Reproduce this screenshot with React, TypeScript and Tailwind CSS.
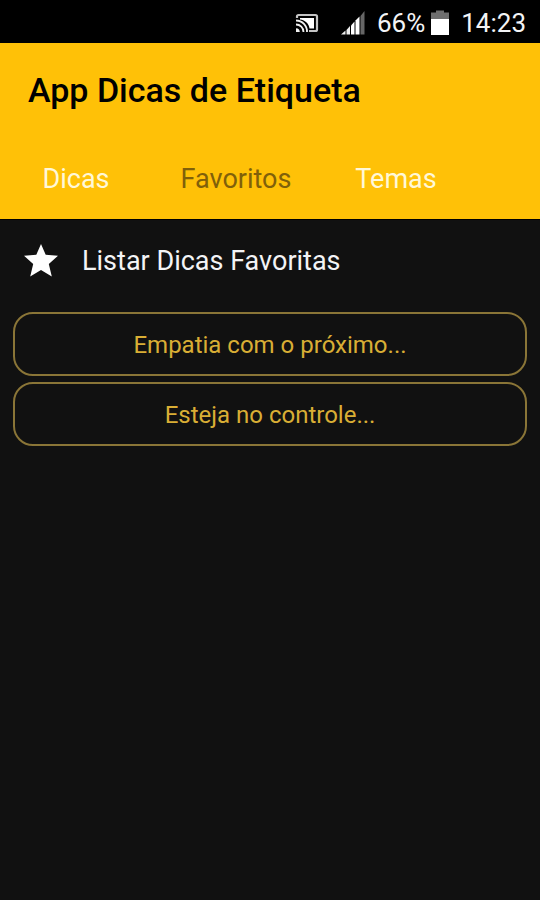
import { useState } from 'react';
import clsx from 'clsx';

const tabs = ['Dicas', 'Favoritos', 'Temas'];
const favorites = ['Empatia com o próximo...', 'Esteja no controle...'];

function CastIcon() {
  return (
    <svg viewBox="0 0 24 20" className="h-5 w-6" fill="none" aria-hidden="true">
      <path d="M2 5V3.500A1.500 1.500 0 0 1 3.500 2H20.500A1.500 1.500 0 0 1 22 3.500V16.500A1.500 1.500 0 0 1 20.500 18H14" stroke="#c4c4c4" strokeWidth="2.200" />
      <path d="M5 5H19V15.500H14.500C14 11 10.500 7 5 6.500Z" fill="#fff" />
      <path d="M1 7.500A11 11 0 0 1 12 19M1 11.500A7.500 7.500 0 0 1 8.500 19" stroke="#f0f0f0" strokeWidth="1.800" />
      <path d="M1 15.200A4 4 0 0 1 4.800 19H1Z" fill="#f0f0f0" />
    </svg>
  );
}

function SignalIcon() {
  return (
    <svg viewBox="0 0 24 25" className="h-[25px] w-6" aria-hidden="true">
      <path d="M0 24.500L4.500 20.500V24.500Z" fill="#eee" />
      <path d="M5.500 20L9 16V24.500H5.500Z" fill="#eee" />
      <path d="M10 15.500L13.500 11.500V24.500H10Z" fill="#fff" />
      <path d="M14.500 10.500L18.500 6.500V24.500H14.500Z" fill="#fff" />
      <path d="M19.500 6L23.500 1V24.500H19.500Z" fill="#666" />
    </svg>
  );
}

function BatteryIcon() {
  return (
    <svg viewBox="0 0 18 25" className="h-[25px] w-[18px]" aria-hidden="true">
      <path d="M0 2.500H5V0.500H13V2.500H18V9H0Z" fill="#6e6e6e" />
      <path d="M0 9H18V25H0Z" fill="#fff" />
    </svg>
  );
}

function StarIcon() {
  return (
    <svg viewBox="0 0 34 33" className="h-[33px] w-[34px]" fill="#fff" aria-hidden="true">
      <path d="M17 0L21.700 10.800L34 11.800L24.800 20L27.800 32.500L17 26L6.200 32.500L9.200 20L0 11.800L12.300 10.800Z" />
    </svg>
  );
}

function StatusBar() {
  return (
    <div className="flex h-[43px] items-center justify-end bg-black pt-0.5 pr-3.5 text-[26px] leading-8 text-gray-100">
      <CastIcon />
      <span className="ml-[22px]">
        <SignalIcon />
      </span>
      <span className="ml-3">66%</span>
      <span className="ml-1.5">
        <BatteryIcon />
      </span>
      <time className="ml-3">14:23</time>
    </div>
  );
}

export default function App() {
  const [active, setActive] = useState('Favoritos');

  return (
    <div className="min-h-screen bg-[#111111] font-['Roboto',sans-serif]">
      <StatusBar />

      <header className="border-b border-black bg-[#ffc107]">
        <h1 className="px-7 pt-7 text-[34px] leading-[38px] font-medium text-black">App Dicas de Etiqueta</h1>
        <nav className="-ml-1 flex pt-[30px]">
          {tabs.map((tab) => (
            <button
              key={tab}
              type="button"
              onClick={() => setActive(tab)}
              className={clsx(
                'h-20 w-40 text-[27px] leading-8',
                tab === active ? 'text-[#80600a]' : 'text-[#fff8d8]'
              )}
            >
              {tab}
            </button>
          ))}
        </nav>
      </header>

      <main>
        {/* Section title */}
        <div className="flex items-center gap-6 px-6 py-6">
          <StarIcon />
          <h2 className="text-[27px] leading-8 text-gray-100">Listar Dicas Favoritas</h2>
        </div>

        {/* Favorites */}
        <ul className="flex flex-col gap-1.5 px-[13px] pt-[11px]">
          {favorites.map((item) => (
            <li key={item}>
              <button
                type="button"
                className="h-16 w-full rounded-[20px] border-2 border-[#8a7537] pt-0.5 text-2xl text-[#d9ae35]"
              >
                {item}
              </button>
            </li>
          ))}
        </ul>
      </main>
    </div>
  );
}
